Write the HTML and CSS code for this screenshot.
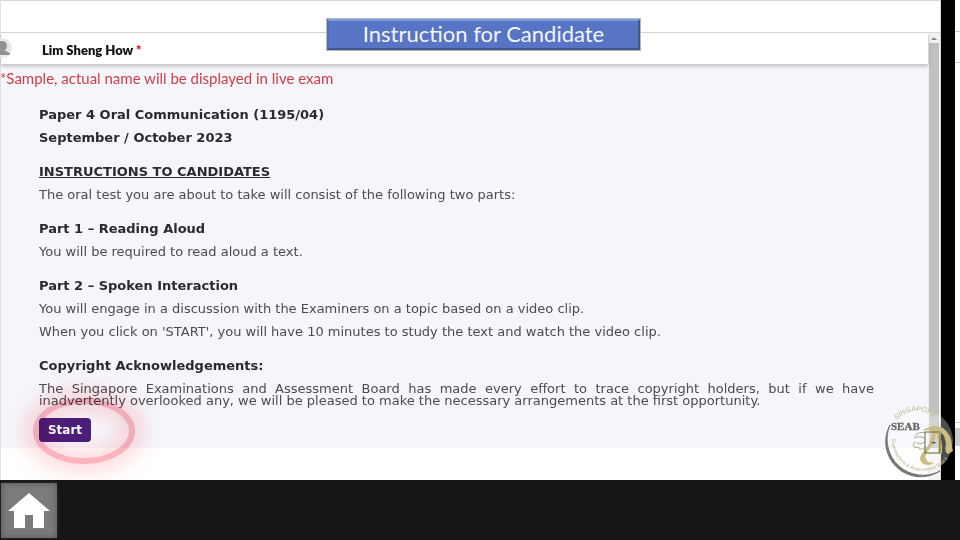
FILE: index.html
```html
<!DOCTYPE html>
<html lang="en">
<head>
<meta charset="utf-8">
<title>Instruction for Candidate</title>
<link rel="stylesheet" href="styles.css">
</head>
<body>
<div class="stage">
  <div class="exam">
    <div class="topbar"></div>
    <div class="viewport">
      <div class="page">
        <header class="userbar">
          <svg class="avatar" viewBox="0 0 20 20" aria-hidden="true"><circle cx="10" cy="10" r="10" fill="#e8e8e8"/><path d="M10 3q5 0 5 5 0 3-2 4v1q5 .5 5 4H2q0-3.500 5-4V12q-2-1-2-4 0-5 5-5z" fill="#929292"/></svg>
          <span class="username">Lim Sheng How <span class="star">*</span></span>
        </header>
        <main class="content">
          <p class="sample">*Sample, actual name will be displayed in live exam</p>
          <div class="instructions">
            <section>
              <h1>Paper 4 Oral Communication (1195/04)</h1>
              <h2>September / October 2023</h2>
            </section>
            <section>
              <h2 class="underlined">INSTRUCTIONS TO CANDIDATES</h2>
              <p>The oral test you are about to take will consist of the following two parts:</p>
            </section>
            <section>
              <h2>Part 1 – Reading Aloud</h2>
              <p>You will be required to read aloud a text.</p>
            </section>
            <section>
              <h2>Part 2 – Spoken Interaction</h2>
              <p>You will engage in a discussion with the Examiners on a topic based on a video clip.</p>
              <p>When you click on 'START', you will have 10 minutes to study the text and watch the video clip.</p>
            </section>
            <section>
              <h2>Copyright Acknowledgements:</h2>
              <p class="justified">The Singapore Examinations and Assessment Board has made every effort to trace copyright holders, but if we have inadvertently overlooked any, we will be pleased to make the necessary arrangements at the first opportunity.</p>
              <div class="action">
                <button type="button" class="start">Start</button>
                <svg class="ring" viewBox="0 0 180 140" aria-hidden="true">
                  <defs><filter id="glow" x="-40%" y="-60%" width="180%" height="220%"><feGaussianBlur stdDeviation="10"/></filter></defs>
                  <ellipse cx="90" cy="70" rx="49" ry="31" fill="none" stroke="#ff5a5a" stroke-opacity=".25" stroke-width="20" filter="url(#glow)"/>
                  <ellipse cx="90" cy="70" rx="48" ry="30" fill="none" stroke="#f9b4be" stroke-width="6"/>
                </svg>
              </div>
            </section>
          </div>
        </main>
      </div>
      <div class="scrollbar"><span class="arrow"></span><span class="thumb"></span></div>
    </div>
  </div>
  <div class="divider"></div>
  <div class="edge"></div>
  <div class="caption">Instruction for Candidate</div>
  <svg class="logo" viewBox="0 0 78 76" role="img" aria-label="Singapore Examinations and Assessment Board">
    <defs>
      <path id="upper" d="M15 18A26 26 0 0 1 57 22"/>
      <path id="lower" d="M10 37A31 31 0 0 0 70 49"/>
    </defs>
    <circle cx="40" cy="39" r="31" fill="#fff" fill-opacity=".3"/>
    <path d="M8 23A35 35 0 0 0 58 69A36 36 0 0 1 8 23z" fill="#777" stroke="#777"/>
    <text class="rim"><textPath href="#upper">SINGAPORE</textPath></text>
    <text class="rim small"><textPath href="#lower">Examinations &amp; Assessment Board</textPath></text>
    <text class="seab" x="9" y="28">SEAB</text>
    <path d="M40 29Q51 21 61 26Q70 32 70 45L71 49L66 52Q62 50 64 42Q63 32 56 28Q61 39 60 52L56 50Q57 38 54 30Q54 40 46 49Q41 55 46 60L52 61Q46 65 40 61Q35 56 42 49Q50 40 50 29Q46 27 40 29z" fill="#c9bd80"/>
    <path d="M33 34q4-5 10-3m-11 5q6-3 10 0m-8 4q-4 1-2 5l6 1m-3-5q5 2 8-1m-6 7q4 1 7-2" fill="none" stroke="#b0a983"/>
    <rect x="43" y="30" width="15" height="21" fill="none" stroke="#6c623a"/>
    <path d="M49 40h5l-2 2z" fill="#554"/>
  </svg>
</div>
<nav class="dock">
  <a class="home" href="#" aria-label="Home"><svg viewBox="0 0 42 36" aria-hidden="true"><path d="M21 0 42 18H36V35H25V22H17V35H6V18H0z" fill="#fff"/></svg></a>
</nav>
</body>
</html>
```

FILE: styles.css
```css
* { box-sizing: border-box; }

body {
  margin: 0;
  min-height: 100vh;
  display: grid;
  grid-template-rows: 1fr 60px;
  background: #161616;
  font-family: "DejaVu Sans", Verdana, sans-serif;
  font-size: 13px;
  color: #4b4b50;
}

h1, h2, p { margin: 0; font-size: inherit; }

.stage {
  position: relative;
  display: grid;
  grid-template-columns: 1fr 14px 5px;
  background: #fff;
}

.exam {
  display: flex;
  flex-direction: column;
  border-left: 1px solid #e2e2e6;
  border-top: 1px solid #d8d8d8;
  border-right: 1px solid #d8d8d8;
}

.topbar { height: 32px; border-bottom: 1px solid #d8d8d8; }

.viewport { flex: 1; display: flex; }
.page { flex: 1; }

.userbar {
  position: relative;
  display: flex;
  align-items: center;
  height: 31px;
  background: #fff;
  box-shadow: 0 2px 4px rgba(0, 0, 0, .25);
}

.avatar { width: 20px; height: 20px; margin: 0 30px 2px -9px; }

.username {
  padding-top: 3px;
  font: 800 13px Lato, sans-serif;
  color: #111;
}

.star { color: #d4202c; }

.content { background: #f5f6fc; padding-bottom: 6px; }

.sample {
  padding: 6px 0 0;
  margin-left: -1px;
  font: 15px/16px Lato, sans-serif;
  color: #d33d46;
}

.instructions {
  display: flex;
  flex-direction: column;
  gap: 22px;
  padding: 23px 54px 0 38px;
  line-height: 12px;
}

section { display: flex; flex-direction: column; gap: 11px; }

h1, h2 { color: #29292e; font-weight: bold; }
.underlined { text-decoration: underline; }
.justified { text-align: justify; }

.action { position: relative; display: flex; }

.start {
  width: 52px;
  height: 24px;
  padding: 0;
  border: 0;
  border-radius: 4px;
  background: #4b1d7d;
  color: #fff;
  font: bold 12px "DejaVu Sans", sans-serif;
}

.ring {
  position: absolute;
  left: -45px;
  top: -57px;
  width: 180px;
  height: 140px;
  mix-blend-mode: multiply;
  pointer-events: none;
}

.scrollbar {
  width: 12px;
  display: flex;
  flex-direction: column;
  align-items: center;
  background: #f2f2f2;
}

.arrow {
  margin: 4px 0 3px;
  border: 3px solid transparent;
  border-top: 0;
  border-bottom: 3px solid #888;
}

.thumb { width: 10px; flex: 1; margin-bottom: 32px; background: #c1c1c1; }

.divider { background: #000; }
.edge { background: linear-gradient(#fff 31px, #ccc 31px 32px, #fff 32px 62px, #ccc 62px 63px, #fff 63px 422px, #ccc 422px 423px, #fff 423px 428px, #ccc 428px 446px, #fff 446px); }

.caption {
  position: absolute;
  left: 50%;
  top: 18px;
  width: 315px;
  margin-left: -154px;
  border: 3px solid;
  border-color: #7d9be5 #40578e #40578e #5270b8;
  outline: 1px solid #b5b5b5;
  outline-offset: -1px;
  background: #5874c4;
  color: #f2f5ff;
  font: 22px/26px Lato, sans-serif;
  padding-bottom: 1px;
  text-align: center;
}

.logo {
  position: absolute;
  right: 0;
  bottom: 2px;
  width: 78px;
  height: 76px;
}

.rim { font: 7px "Liberation Sans", sans-serif; fill: #bfb283; }
.small { font-size: 5px; }
.seab { font: bold 11px "Liberation Serif", serif; fill: #666; stroke: #666; stroke-width: 0.3px; }

.dock { display: flex; background: #161616; }

.home {
  display: grid;
  place-items: center;
  width: 56px;
  margin: 3px 1px 2px;
  background: #7b7b7b;
  box-shadow: inset 0 0 6px #555, 0 0 4px #333;
}

.home svg { width: 42px; height: 36px; }
```
